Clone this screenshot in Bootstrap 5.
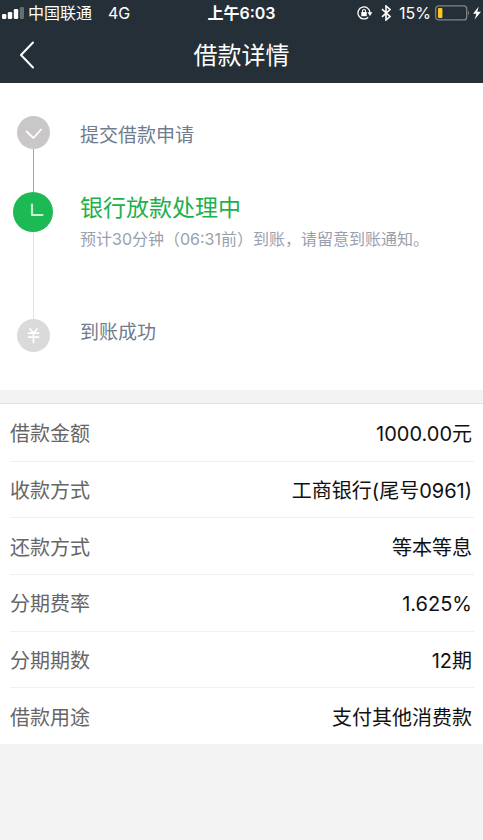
<!DOCTYPE html>
<html lang="zh-CN">
<head>
<meta charset="utf-8">
<meta name="viewport" content="width=device-width, initial-scale=1">
<title>借款详情</title>
<link href="https://cdn.jsdelivr.net/npm/bootstrap@5.3.0/dist/css/bootstrap.min.css" rel="stylesheet">
<style>
  body { background: #f3f3f3; font-family: Inter, "Noto Sans CJK SC", sans-serif; }
  .top-area { background: #252f37; color: #fff; }
  .status-bar { height: 26px; padding: 0 2px; font-size: 16px; line-height: 26px; }
  .status-bar .side { flex: 1 1 0; }
  .title-bar { height: 57px; padding: 0 16px; }
  .title-bar h1 { font-size: 24px; line-height: 32px; font-weight: 400; padding-top: 2px; }
  .title-bar .side { flex: 1 1 0; }
  .back-btn { color: #fff; line-height: 0; }
  .steps { padding: 33px 13px 38px; }
  .step { display: flex; gap: 27px; }
  .track { width: 40px; flex: none; display: flex; flex-direction: column; align-items: center; }
  .dot { width: 33px; height: 33px; border-radius: 50%; background: #c9c7c8; flex: none; }
  .dot-now { width: 40px; height: 40px; background: #1cb955; }
  .dot-next { background: #dadada; }
  .link-line { width: 1px; flex-grow: 1; min-height: 43px; background: #6ac594; }
  .link-line.pending { min-height: 87px; background: #e4e4e4; }
  .step-name { font-size: 19px; line-height: 28px; color: #707b8e; font-weight: 400; }
  .step-done { padding-top: 6px; }
  .step-now { font-size: 23px; line-height: 32px; color: #1cb14c; }
  .step-note { font-size: 16px; line-height: 24px; color: #99a0ac; margin-top: 3px; }
  .details { display: grid; grid-auto-rows: 1fr; min-height: 341px; margin-top: 13px; padding: 0 9px 0 10px; border-top: 1px solid #e2e2e2; font-size: 20px; line-height: 28px; }
  .details dt { color: #666; font-weight: 400; }
  .details dd { color: #111; padding-right: 2px; }
  .detail-row { padding-top: 3px; }
  .detail-row + .detail-row { border-top: 1px solid #f0f0f0; }
</style>
<script src="https://cdn.jsdelivr.net/npm/bootstrap@5.3.0/dist/js/bootstrap.bundle.min.js"></script>
</head>
<body>
<header class="top-area">
  <div class="status-bar d-flex align-items-center">
    <div class="side d-flex align-items-center">
      <svg width="22" height="12" viewBox="0 0 22 12" fill="#fff" aria-hidden="true"><rect y="7" width="4.4" height="5" rx="1.3"/><rect x="5.8" y="5" width="4.4" height="7" rx="1.3"/><rect x="11.8" y="2" width="4.4" height="10" rx="1.3"/><rect x="17.8" width="4.2" height="12" rx="1.3" opacity=".3"/></svg>
      <span class="ms-1">中国联通</span><span class="ms-3">4G</span>
    </div>
    <div class="fw-semibold">上午6:03</div>
    <div class="side d-flex align-items-center justify-content-end">
      <svg width="16" height="14" viewBox="0 0 16 14" fill="none" stroke="#fff" stroke-width="1.3" aria-hidden="true"><path d="M11.2 11.2A6 6 0 1 1 13 7"/><path d="M10.4 6.3h5L13 10z" fill="#fff" stroke="none"/><rect x="4.3" y="6" width="5.4" height="4.2" fill="#fff" stroke="none"/><path d="M5.5 6.2V5a1.5 1.5 0 0 1 3 0v1.2" stroke-width="1.1"/></svg>
      <svg class="ms-2" width="10" height="16" viewBox="0 0 10 16" fill="none" stroke="#fff" stroke-width="1.6" aria-hidden="true"><path d="M1 4.2l8 7.3L5 15V1l4 3.5-8 7.3"/></svg>
      <span class="ms-2">15%</span>
      <svg class="ms-1" width="46" height="16" viewBox="0 0 46 16" aria-hidden="true"><rect x=".7" y=".9" width="31" height="14" rx="3" fill="none" stroke="#7d8589" stroke-width="1.3"/><rect x="3" y="3" width="4.4" height="10" rx="1" fill="#fdca15"/><path d="M33 5.5q2 2.5 0 5z" fill="#7d8589"/><path d="M43.8 1.5L38 8.8h3.4L39.6 14.5 46 6.8h-3.8z" fill="#fff"/></svg>
    </div>
  </div>
  <nav class="title-bar d-flex align-items-center" aria-label="页面导航">
    <div class="side">
      <button type="button" class="back-btn btn p-0 border-0" aria-label="返回">
        <svg width="20" height="28" viewBox="0 0 20 28" fill="none" stroke="#fff" stroke-width="2" stroke-linecap="round" stroke-linejoin="round"><path d="M17 1.5L5 14l12 12.5"/></svg>
      </button>
    </div>
    <h1 class="m-0">借款详情</h1>
    <div class="side"></div>
  </nav>
</header>
<main>
  <ol class="steps list-unstyled bg-white m-0">
    <li class="step">
      <div class="track">
        <svg class="dot" viewBox="0 0 33 33" fill="none" stroke="#fff" stroke-width="1.8" stroke-linecap="round" stroke-linejoin="round" aria-hidden="true"><path d="M9.5 15.5l7 6.5 7.5-8.5"/></svg>
        <div class="link-line"></div>
      </div>
      <h2 class="step-name step-done m-0">提交借款申请</h2>
    </li>
    <li class="step" aria-current="step">
      <div class="track">
        <svg class="dot dot-now" viewBox="0 0 40 40" fill="none" stroke="#c4f3d2" stroke-width="2.2" stroke-linecap="round" stroke-linejoin="round" aria-hidden="true"><path d="M19 12.5V23h10.5"/></svg>
        <div class="link-line pending"></div>
      </div>
      <div>
        <h2 class="step-name step-now m-0">银行放款处理中</h2>
        <p class="step-note mb-0">预计30分钟（06:31前）到账，请留意到账通知。</p>
      </div>
    </li>
    <li class="step">
      <div class="track">
        <svg class="dot dot-next" viewBox="0 0 33 33" fill="none" stroke="#fff" stroke-width="1.7" stroke-linecap="round" aria-hidden="true"><path d="M13 10l3.5 4 3.5-4M11.5 14.2h10M11.5 18.2h10M16.5 14v9.5"/></svg>
      </div>
      <h2 class="step-name m-0">到账成功</h2>
    </li>
  </ol>
  <dl class="details bg-white mb-0">
    <div class="detail-row d-flex align-items-center justify-content-between"><dt>借款金额</dt><dd class="mb-0">1000.00元</dd></div>
    <div class="detail-row d-flex align-items-center justify-content-between"><dt>收款方式</dt><dd class="mb-0">工商银行(尾号0961)</dd></div>
    <div class="detail-row d-flex align-items-center justify-content-between"><dt>还款方式</dt><dd class="mb-0">等本等息</dd></div>
    <div class="detail-row d-flex align-items-center justify-content-between"><dt>分期费率</dt><dd class="mb-0">1.625%</dd></div>
    <div class="detail-row d-flex align-items-center justify-content-between"><dt>分期期数</dt><dd class="mb-0">12期</dd></div>
    <div class="detail-row d-flex align-items-center justify-content-between"><dt>借款用途</dt><dd class="mb-0">支付其他消费款</dd></div>
  </dl>
</main>
</body>
</html>
